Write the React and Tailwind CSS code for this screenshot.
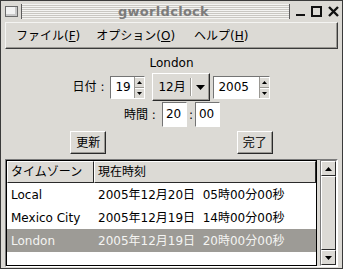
import React from 'react';

const font = { fontFamily: '"DejaVu Sans", "Noto Sans CJK JP", sans-serif' };

function Tri({ up = false, size = 3 }) {
  return (
    <svg width={size * 2 + 1} height={size + 1} viewBox={`0 0 ${size * 2 + 1} ${size + 1}`}>
      {up ? (
        <polygon points={`0,${size + 1} ${size * 2 + 1},${size + 1} ${size + 0.5},0`} fill="#000" />
      ) : (
        <polygon points={`0,0 ${size * 2 + 1},0 ${size + 0.5},${size + 1}`} fill="#000" />
      )}
    </svg>
  );
}

function Spin({ value, wide }) {
  return (
    <div className={`flex h-[23px] ${wide ? 'w-[57px]' : 'w-[35px]'} border border-t-[#747474] border-l-[#747474] border-b-white border-r-white bg-white`}>
      <div className="flex-1 pl-[4px] leading-[21px]">{value}</div>
      <div className="w-[10px] flex flex-col bg-[#dcdad5] border-l border-[#9a9893]">
        <div className="flex-1 flex items-center justify-center border-b border-[#9a9893] border-t border-t-white">
          <Tri up size={2} />
        </div>
        <div className="flex-1 flex items-center justify-center border-t border-white">
          <Tri size={2} />
        </div>
      </div>
    </div>
  );
}

function Entry({ value }) {
  return (
    <div className="h-[25px] w-[25px] border border-t-[#747474] border-l-[#747474] border-b-white border-r-white bg-white pl-[3px] leading-[23px]">
      {value}
    </div>
  );
}

function Btn({ children }) {
  return (
    <div className="h-[23px] w-[36px] flex items-center justify-center border border-t-white border-l-white border-b-[#2a2a2a] border-r-[#2a2a2a] bg-[#dcdad5] shadow-[inset_-1px_-1px_0_#9a9893]">
      {children}
    </div>
  );
}

export default function App() {
  const rows = [
    { tz: 'Local', t: '2005年12月20日  05時00分00秒' },
    { tz: 'Mexico City', t: '2005年12月19日  14時00分00秒' },
    { tz: 'London', t: '2005年12月19日  20時00分00秒', sel: true },
  ];

  return (
    <div style={font} className="w-[343px] h-[269px] flex flex-col bg-[#dcdad5] border border-[#3a3a3a] text-[12px] text-black overflow-hidden">
      {/* Title bar */}
      <div className="h-[18px] flex items-center pl-[4px] pr-[3px] gap-[3px] mt-[1px]">
        <div className="w-[13px] h-[11px] border border-[#6a6a6a] bg-[#f2f2f2] shadow-[inset_-2px_-2px_0_#c8c8c8]" />
        <div className="flex-1 h-[15px] pl-[16px] border-l border-r border-[#5c5c5c] bg-[repeating-linear-gradient(to_bottom,#f4f4f2_0px,#f4f4f2_1px,#c9c7c2_1px,#c9c7c2_2px)] flex items-center justify-center">
          <span className="font-bold text-[13px] leading-[15px] text-[#7c7c7c] tracking-[0.3px]">gworldclock</span>
        </div>
        <div className="flex items-center gap-[6px] pl-[3px]">
          <svg width="9" height="12" viewBox="0 0 9 12"><rect x="0" y="9" width="9" height="2" fill="#111" /></svg>
          <svg width="11" height="11" viewBox="0 0 11 11"><rect x="1" y="1" width="9" height="9" fill="none" stroke="#111" strokeWidth="2" /></svg>
          <svg width="11" height="11" viewBox="0 0 11 11"><path d="M1 1 L10 10 M10 1 L1 10" stroke="#111" strokeWidth="2.4" /></svg>
        </div>
      </div>

      {/* Menu bar */}
      <div className="mx-[4px] mt-[2px] h-[27px] flex items-center pl-[10px] border border-t-[#f4f4f2] border-l-[#f4f4f2] border-b-[#3a3a3a] border-r-[#3a3a3a] shadow-[inset_-1px_-1px_0_#9a9893]">
        <span>ファイル(<span className="underline">F</span>)</span>
        <span className="ml-[16px]">オプション(<span className="underline">O</span>)</span>
        <span className="ml-[19px]">ヘルプ(<span className="underline">H</span>)</span>
      </div>

      {/* Content */}
      <div className="flex flex-col items-center">
        <div className="mt-[7px] leading-[14px]">London</div>

        <div className="mt-[3px] flex items-center h-[28px]">
          <span className="mr-[6px]">日付 :</span>
          <Spin value="19" />
          <div className="ml-[7px] h-[28px] w-[58px] flex items-center border border-t-white border-l-white border-b-[#2a2a2a] border-r-[#2a2a2a] shadow-[inset_-1px_-1px_0_#9a9893]">
            <span className="pl-[5px] w-[37px]">12月</span>
            <div className="h-[18px] border-l border-l-[#9a9893] border-r border-r-white" />
            <div className="flex-1 flex justify-center"><Tri size={4} /></div>
          </div>
          <div className="ml-[3px]">
            <Spin value="2005" wide />
          </div>
        </div>

        <div className="mt-[1px] flex items-center h-[25px] ml-[1px]">
          <span className="mr-[6px]">時間 :</span>
          <Entry value="20" />
          <span className="mx-[2px]">:</span>
          <Entry value="00" />
        </div>
      </div>

      <div className="mx-[4px] mt-[4px] grid grid-cols-2">
        <div className="flex justify-center"><Btn>更新</Btn></div>
        <div className="flex justify-center"><Btn>完了</Btn></div>
      </div>

      {/* List */}
      <div className="mx-[4px] mt-[5px] flex-1 mb-[1px] flex border border-t-[#7a7a7a] border-l-[#7a7a7a] border-b-white border-r-white">
        <div className="flex-1 flex flex-col border border-black bg-white">
          <div className="flex h-[22px] bg-[#dcdad5]">
            <div className="w-[87px] pl-[3px] leading-[20px] border border-t-white border-l-white border-b-[#2a2a2a] border-r-[#2a2a2a]">タイムゾーン</div>
            <div className="flex-1 pl-[3px] leading-[20px] border border-t-white border-l-white border-b-[#2a2a2a] border-r-[#2a2a2a]">現在時刻</div>
          </div>
          {rows.map((r) => (
            <div key={r.tz} className={`flex h-[23px] items-center ${r.sel ? 'bg-[#9d9b96] text-[#f4f4f2]' : ''}`}>
              <div className="w-[87px] pl-[4px]">{r.tz}</div>
              <div className="flex-1 pl-[4px] whitespace-pre">{r.t}</div>
            </div>
          ))}
        </div>
        {/* Scrollbar */}
        <div className="w-[17px] ml-[3px] flex flex-col border border-t-[#7a7a7a] border-l-[#7a7a7a] border-b-white border-r-white bg-[#c4c2bd]">
          <div className="h-[15px] flex items-center justify-center bg-[#dcdad5] border border-t-white border-l-white border-b-[#2a2a2a] border-r-[#2a2a2a]"><Tri up size={3} /></div>
          <div className="flex-1 bg-[#dcdad5] border border-t-white border-l-white border-b-[#2a2a2a] border-r-[#2a2a2a]" />
          <div className="h-[15px] flex items-center justify-center bg-[#dcdad5] border border-t-white border-l-white border-b-[#2a2a2a] border-r-[#2a2a2a]"><Tri size={3} /></div>
        </div>
      </div>
    </div>
  );
}
